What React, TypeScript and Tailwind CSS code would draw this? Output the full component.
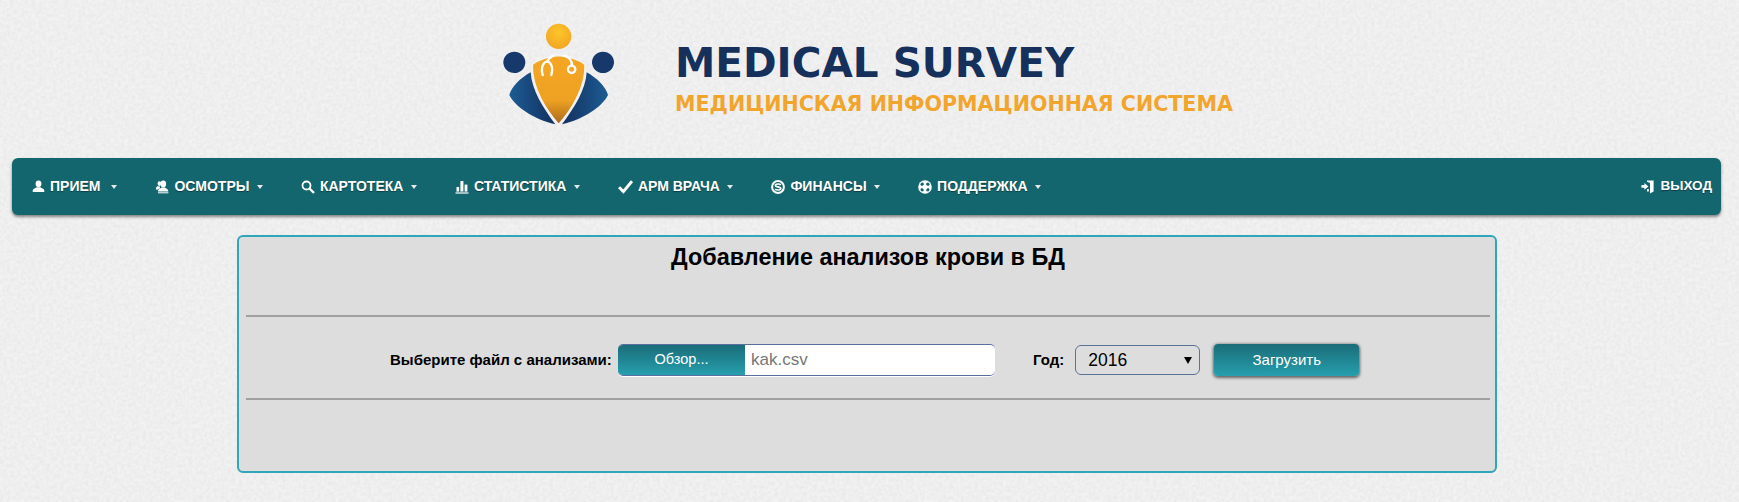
const MENU: { label: string; icon: React.ReactNode; wide?: boolean }[] = [
  { label: "ПРИЕМ", icon: <UserIcon />, wide: true },
  { label: "ОСМОТРЫ", icon: <UsersIcon /> },
  { label: "КАРТОТЕКА", icon: <SearchIcon /> },
  { label: "СТАТИСТИКА", icon: <StatsIcon /> },
  { label: "АРМ ВРАЧА", icon: <CheckIcon /> },
  { label: "ФИНАНСЫ", icon: <CoinIcon /> },
  { label: "ПОДДЕРЖКА", icon: <BuoyIcon /> },
];

function UserIcon() {
  return (
    <svg width="13" height="13" viewBox="0 0 13 13" fill="white">
      <ellipse cx="6.5" cy="3.8" rx="2.9" ry="3.4" />
      <path d="M4.6 7.2 L8.4 7.2 C9.5 8.4 12 8.6 12.3 10.4 L12.3 12 L0.7 12 L0.7 10.4 C1 8.6 3.5 8.4 4.6 7.2Z" />
    </svg>
  );
}

function UsersIcon() {
  return (
    <svg width="14" height="14" viewBox="0 0 14 14" fill="white">
      <ellipse cx="8.3" cy="4" rx="2.8" ry="3.4" />
      <ellipse cx="4.4" cy="3.6" rx="1.8" ry="2.4" />
      <path d="M2.2 6.2 L5 6.4 L4.8 8.4 L1.5 10 L0.8 8Z" />
      <path d="M6.6 7.4 L10 7.4 C10.8 8.4 13 8.8 13.2 10.4 L13.2 11.6 L3 11.6 L3 10.4 C3.3 8.8 5.7 8.4 6.6 7.4Z" />
      <rect x="3" y="12.3" width="10.4" height="1" />
    </svg>
  );
}

function SearchIcon() {
  return (
    <svg width="14" height="14" viewBox="0 0 14 14" fill="none" stroke="white">
      <circle cx="5.5" cy="5.5" r="4" strokeWidth="1.8" />
      <path d="M8.5 8.5 L13 13" strokeWidth="2.4" />
    </svg>
  );
}

function StatsIcon() {
  return (
    <svg width="14" height="14" viewBox="0 0 14 14" fill="white">
      <rect x="1.5" y="7" width="2.6" height="4.6" />
      <rect x="5.4" y="1" width="3" height="10.6" />
      <rect x="9.6" y="4.6" width="2.8" height="7" />
      <rect x="0.5" y="12.4" width="13" height="1.2" />
    </svg>
  );
}

function CheckIcon() {
  return (
    <svg width="15" height="14" viewBox="0 0 15 14" fill="none" stroke="white" strokeWidth="3">
      <path d="M1 7.2 L5.4 11.6 L14 1.2" />
    </svg>
  );
}

function CoinIcon() {
  return (
    <svg width="14" height="14" viewBox="0 0 14 14" fill="none" stroke="white">
      <circle cx="7" cy="7" r="5.9" strokeWidth="2" />
      <path d="M9.8 5 C9 3.6 4.4 3.6 4.4 5.4 C4.4 7.4 9.8 6.4 9.8 8.6 C9.8 10.4 5 10.4 4.2 9" strokeWidth="1.6" />
    </svg>
  );
}

function BuoyIcon() {
  return (
    <svg width="14" height="14" viewBox="0 0 14 14">
      <circle cx="7" cy="7" r="6.8" fill="white" />
      <circle cx="4.2" cy="4.2" r="1.7" fill="#14666e" />
      <circle cx="9.8" cy="4.2" r="1.7" fill="#14666e" />
      <circle cx="4.2" cy="9.8" r="1.7" fill="#14666e" />
      <circle cx="9.8" cy="9.8" r="1.7" fill="#14666e" />
      <circle cx="7" cy="7" r="2.6" fill="white" />
    </svg>
  );
}

function LogoutIcon() {
  return (
    <svg width="13" height="14" viewBox="0 0 13 14" fill="white">
      <path d="M6 0.5 L12.6 0.5 L12.6 11.4 L9 13.6 L9 3 L6 1.8Z" />
      <path d="M0.4 5 L3.4 5 L3.4 3 L7.4 6.4 L3.4 9.8 L3.4 7.8 L0.4 7.8Z" />
      <path d="M6 9 L7.8 9 L7.8 11.4 L6 11.4Z" />
    </svg>
  );
}

function Caret() {
  return <span className="ml-[7.5px] h-0 w-0 border-x-[3.5px] border-t-[4px] border-x-transparent border-t-[#e8e8e8]" />;
}

function LogoMark() {
  return (
    <svg width="140" height="120" viewBox="0 0 420 360" className="shrink-0">
      <defs>
        <linearGradient id="orange" x1="0" y1="0" x2="0" y2="1">
          <stop offset="0" stopColor="#f5a623" />
          <stop offset="0.65" stopColor="#eea122" />
          <stop offset="1" stopColor="#a8691e" />
        </linearGradient>
        <radialGradient id="head" cx="0.5" cy="0.35" r="0.7">
          <stop offset="0" stopColor="#fbc62a" />
          <stop offset="1" stopColor="#f3a322" />
        </radialGradient>
        <linearGradient id="wingL" x1="0" y1="0" x2="1" y2="0">
          <stop offset="0" stopColor="#1d5c94" />
          <stop offset="1" stopColor="#12305f" />
        </linearGradient>
        <linearGradient id="wingR" x1="1" y1="0" x2="0" y2="0">
          <stop offset="0" stopColor="#1d5c94" />
          <stop offset="1" stopColor="#12305f" />
        </linearGradient>
      </defs>
      <ellipse cx="206" cy="64" rx="38" ry="38" fill="url(#head)" />
      <ellipse cx="73" cy="142" rx="33" ry="32" fill="#17386a" />
      <ellipse cx="339" cy="142" rx="33" ry="32" fill="#17386a" />
      <path d="M122 172 C90 190 65 215 58 240 C75 275 130 312 196 328 C160 280 125 225 122 172Z" fill="url(#wingL)" />
      <path d="M290 172 C322 190 347 215 354 240 C337 275 282 312 216 328 C252 280 287 225 290 172Z" fill="url(#wingR)" />
      <path d="M127 148 C150 132 180 124 206 122 C232 124 262 132 285 148 C288 220 240 290 206 328 C172 290 124 220 127 148Z" fill="url(#orange)" stroke="#f4f4f4" strokeWidth="4" />
      <path d="M158 180 C150 150 165 140 171 140 C178 140 192 150 184 180 M171 140 C175 133 180 126 190 122 M222 122 C238 126 246 138 246 152" fill="none" stroke="white" strokeWidth="7" strokeLinecap="round" />
      <circle cx="245" cy="163" r="11" fill="none" stroke="white" strokeWidth="7" />
    </svg>
  );
}

export default function App() {
  return (
    <div className="relative h-[502px] w-full overflow-hidden bg-[#f2f2f2] font-['Liberation_Sans',sans-serif]">
      {/* paper texture */}
      <svg className="absolute inset-0 h-full w-full opacity-[0.16]">
        <filter id="paper">
          <feTurbulence type="fractalNoise" baseFrequency="0.28" numOctaves="4" seed="4" />
          <feColorMatrix values="0 0 0 0 0.5  0 0 0 0 0.5  0 0 0 0 0.5  1.8 0 0 0 -0.5" />
        </filter>
        <rect width="100%" height="100%" filter="url(#paper)" />
      </svg>

      <div className="relative">
        {/* Logo */}
        <div className="flex h-[158px] items-start pl-[490px] pt-[15px]">
          <LogoMark />
          <div className="ml-[45px] pt-[27px] font-['DejaVu_Sans',sans-serif] font-bold leading-none">
            <div className="h-[42px] text-[40.5px] leading-[42px] text-[#14305b]">MEDICAL SURVEY</div>
            <div className="mt-[10px] text-[20.6px] text-[#f2a52c]">МЕДИЦИНСКАЯ ИНФОРМАЦИОННАЯ СИСТЕМА</div>
          </div>
        </div>

        {/* Menu */}
        <nav className="ml-[12px] mr-[18px] flex h-[57px] items-center justify-between rounded-[6px] bg-[#14666e] shadow-[0_2px_3px_rgba(0,0,0,0.45)] [text-shadow:0_1px_1px_rgba(0,0,0,0.4)]">
          <ul className="flex items-center">
            {MENU.map((m) => (
              <li key={m.label} className="flex items-center px-[19px] text-[14px] font-bold text-white">
                <span className="mr-[5px] flex min-w-[14px] items-center justify-center">{m.icon}</span>
                {m.label}
                {m.wide && <span className="w-[3.5px]" />}
                <Caret />
              </li>
            ))}
          </ul>
          <div className="flex items-center pr-[9px] text-[13.5px] font-bold text-white">
            <span className="mr-[6px] flex"><LogoutIcon /></span>
            ВЫХОД
          </div>
        </nav>

        {/* Form panel */}
        <section className="ml-[237px] mt-[20px] h-[238px] w-[1260px] rounded-[6px] border-2 border-[#2fa6b9] bg-[#dddddd] pl-[7px] pr-[5px]">
          <h1 className="mt-[5px] text-center text-[23.4px] font-bold leading-[30px] text-black">Добавление анализов крови в БД</h1>
          <div className="mt-[43px] h-[2px] bg-[#a0a0a0]" />
          <div className="flex h-[81px] items-center pl-[144px] pt-[5px]">
            <span className="w-[228px] text-[15px] font-bold text-black">Выберите файл с анализами:</span>
            <div className="flex h-[32px] w-[377px] overflow-hidden rounded-[5px] border-y border-[#5a6f9e] bg-white shadow-[0_1px_0_#fff]">
              <div className="flex w-[127px] items-center justify-center bg-gradient-to-b from-[#1a6d78] to-[#279fae] text-[14.5px] text-white">Обзор...</div>
              <div className="flex items-center pl-[6px] text-[17px] text-[#777]">kak.csv</div>
            </div>
            <span className="ml-[38px] text-[15px] font-bold text-black">Год:</span>
            <div className="ml-[11px] flex h-[30px] w-[125px] items-center justify-between rounded-[6px] border border-[#5b7299] pl-[12px] pr-[7px] text-[17.5px] text-black">
              2016
              <span className="h-0 w-0 border-x-[4px] border-t-[7px] border-x-transparent border-t-black" />
            </div>
            <button className="ml-[14px] h-[32px] w-[145px] rounded-[4px] bg-gradient-to-b from-[#1a6d78] to-[#279fae] text-[15px] text-white shadow-[0_1px_3px_1px_rgba(0,0,0,0.55)]">Загрузить</button>
          </div>
          <div className="h-[2px] bg-[#a0a0a0]" />
        </section>
      </div>
    </div>
  );
}
